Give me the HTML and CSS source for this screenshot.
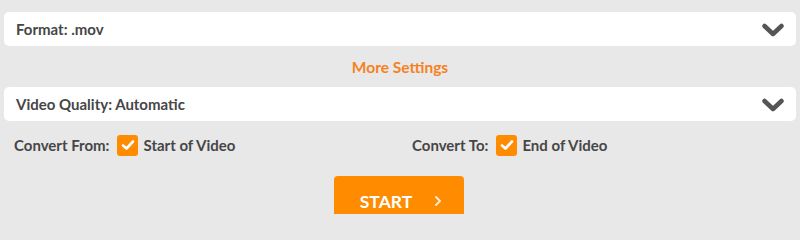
FILE: index.html
```html
<!DOCTYPE html>
<html>
<head>
<meta charset="utf-8">
<link rel="stylesheet" href="styles.css">
</head>
<body>
<div class="page">
  <div class="select">
    <span class="label">Format: .mov</span>
    <svg class="chev" viewBox="0 0 22 14" width="22" height="14"><path d="M2.5 3 L11 11 L19.5 3" fill="none" stroke="#555" stroke-width="4.5" stroke-linecap="round" stroke-linejoin="round"/></svg>
  </div>
  <div class="more">More Settings</div>
  <div class="select">
    <span class="label">Video Quality: Automatic</span>
    <svg class="chev" viewBox="0 0 22 14" width="22" height="14"><path d="M2.5 3 L11 11 L19.5 3" fill="none" stroke="#555" stroke-width="4.5" stroke-linecap="round" stroke-linejoin="round"/></svg>
  </div>
  <div class="convert">
    <div class="opt">
      <span class="opt-label">Convert From:</span>
      <span class="check"><svg viewBox="0 0 14 12" width="14" height="12"><path d="M2 6.5 L5.5 9.5 L12 2.5" fill="none" stroke="#fff" stroke-width="2.6" stroke-linecap="round" stroke-linejoin="round"/></svg></span>
      <span class="opt-label">Start of Video</span>
    </div>
    <div class="opt">
      <span class="opt-label">Convert To:</span>
      <span class="check"><svg viewBox="0 0 14 12" width="14" height="12"><path d="M2 6.5 L5.5 9.5 L12 2.5" fill="none" stroke="#fff" stroke-width="2.6" stroke-linecap="round" stroke-linejoin="round"/></svg></span>
      <span class="opt-label">End of Video</span>
    </div>
  </div>
  <div class="btn-row">
    <button class="start">START <svg class="arrow" viewBox="0 0 8 12" width="8" height="12"><path d="M2 2 L6 6 L2 10" fill="none" stroke="#fff" stroke-width="1.8" stroke-linecap="round" stroke-linejoin="round"/></svg></button>
  </div>
</div>
</body>
</html>
```
FILE: styles.css
```css
html, body {
  margin: 0;
  padding: 0;
  background: #e8e8e8;
  overflow: hidden;
}
body {
  font-family: "Lato", "Open Sans", sans-serif;
  font-weight: 700;
  color: #464646;
  width: 800px;
  height: 214px;
}
.page {
  padding: 12px 4px 0 4px;
}
.select {
  height: 34px;
  background: #fff;
  border-radius: 5px;
  display: flex;
  align-items: center;
  justify-content: space-between;
  padding: 0 12px 0 12px;
}
.label {
  font-size: 15px;
}
.chev {
  display: block;
  margin-top: 1px;
}
.more {
  height: 41px;
  display: flex;
  align-items: center;
  justify-content: center;
  color: #f5821f;
  font-size: 15.5px;
  padding-top: 1px;
  box-sizing: border-box;
}
.convert {
  display: grid;
  grid-template-columns: 398px 1fr;
  padding: 13px 10px 0 10px;
  height: 22px;
}
.opt {
  display: flex;
  align-items: center;
  gap: 5px;
}
.opt-label {
  font-size: 15px;
}
.check {
  width: 21px;
  height: 21px;
  background: #ff8c00;
  border-radius: 3px;
  display: flex;
  align-items: center;
  justify-content: center;
  margin-left: 3px;
}
.check svg { display: block; }
.btn-row {
  display: flex;
  justify-content: center;
  padding-top: 20px;
}
.start {
  width: 130px;
  height: 50px;
  background: #ff8c00;
  border: none;
  border-radius: 4px 4px 0 0;
  color: #fff;
  font-family: "Lato", "Open Sans", sans-serif;
  font-weight: 700;
  font-size: 17.5px;
  display: flex;
  align-items: center;
  justify-content: center;
  gap: 22px;
  padding: 0 0 0 4px;
  margin-left: -2px;
}
.arrow {
  display: block;
  opacity: 0.85;
}
```
